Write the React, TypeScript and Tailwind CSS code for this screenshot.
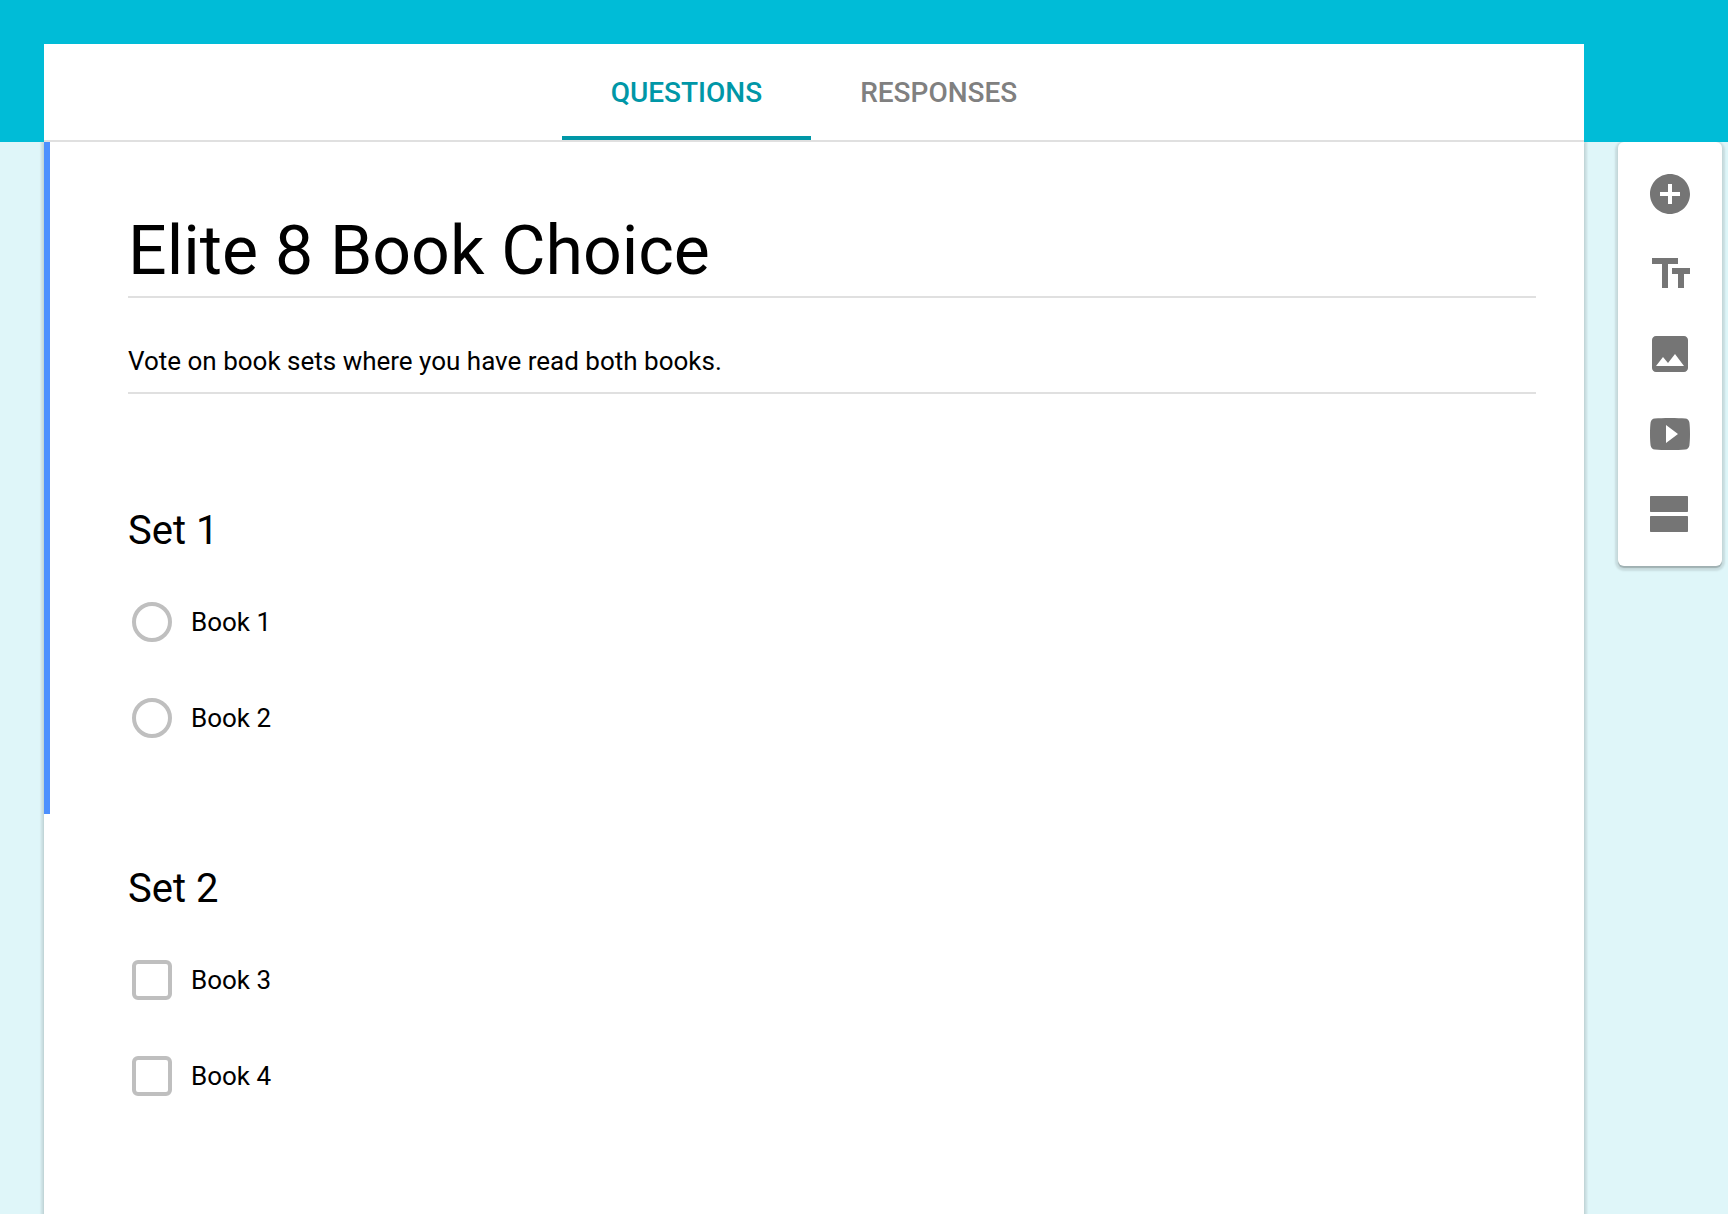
import React, { useState } from "react";
import classNames from "clsx";

interface Question {
  id: string;
  title: string;
  type: "radio" | "checkbox";
  options: string[];
}

const questions: Question[] = [
  { id: "set-1", title: "Set 1", type: "radio", options: ["Book 1", "Book 2"] },
  { id: "set-2", title: "Set 2", type: "checkbox", options: ["Book 3", "Book 4"] },
];

const tools = [
  {
    label: "Add question",
    path: "M12 2C6.48 2 2 6.48 2 12s4.48 10 10 10 10-4.48 10-10S17.52 2 12 2zm5 11h-4v4h-2v-4H7v-2h4V7h2v4h4v2z",
  },
  {
    label: "Add title and description",
    path: "M3 4v3h5v12h3V7h5V4H3zm19 5h-9v3h3v7h3v-7h3V9z",
  },
  {
    label: "Add image",
    path: "M21 19V5c0-1.1-.9-2-2-2H5c-1.1 0-2 .9-2 2v14c0 1.1.9 2 2 2h14c1.1 0 2-.9 2-2zM8.5 13.5l2.5 3.01L14.5 12l4.5 6H5l3.5-4.5z",
  },
  {
    label: "Add video",
    path: "M12 4c-3.2 0-5.6.1-7.6.3C3.2 4.4 2.5 5.1 2.3 6.3 2.1 7.800 2 9.6 2 12s.1 4.2.3 5.7c.2 1.2.9 1.9 2.1 2 2 .2 4.4.3 7.600.3s5.6-.1 7.6-.3c1.2-.1 1.9-.8 2.1-2 .2-1.5.3-3.3.3-5.700s-.1-4.2-.3-5.7c-.2-1.2-.9-1.9-2.1-2C17.6 4.1 15.2 4 12 4zM10 16.5v-9l6 4.5-6 4.5z",
  },
  {
    label: "Add section",
    path: "M2.5 3h18c.3 0 .5.2.5.5v7c0 .3-.2.5-.5.5h-18c-.3 0-.5-.2-.5-.5v-7c0-.3.2-.5.5-.5zM2.5 13h18c.3 0 .5.2.5.5v7c0 .3-.2.5-.5.5h-18c-.3 0-.5-.2-.5-.5v-7c0-.3.2-.5.5-.5z",
  },
];

const tabs = ["QUESTIONS", "RESPONSES"];

const QuestionBlock = ({ id, title, type, options }: Question) => {
  return (
    <fieldset>
      <legend className="text-[40px] leading-[50px]">{title}</legend>
      <div className="flex flex-col gap-14 pt-[46px] pl-1">
        {options.map((option) => (
          <label key={option} className="flex items-center gap-[19px] text-[26px] leading-10">
            <input
              type={type}
              name={id}
              className={classNames(
                "size-10 shrink-0 appearance-none border-4 border-[#bfbfbf] bg-white checked:border-[#0097a7]",
                type === "radio" ? "rounded-full" : "rounded-md checked:bg-[#0097a7]"
              )}
            />
            {option}
          </label>
        ))}
      </div>
    </fieldset>
  );
};

const Toolbar = () => {
  return (
    <aside className="mr-1.5 ml-[34px] flex shrink-0 flex-col gap-8 self-start rounded-md bg-white p-7 shadow-[0_2px_1px_rgba(0,0,0,0.2),0_2px_2px_3px_rgba(0,0,0,0.1)]">
      {tools.map((tool) => (
        <button key={tool.label} type="button" aria-label={tool.label} className="size-12 cursor-pointer">
          <svg viewBox="0 0 24 24" className="size-12 fill-[#757575]">
            <path d={tool.path} />
          </svg>
        </button>
      ))}
    </aside>
  );
};

const App = () => {
  const [activeTab, setActiveTab] = useState("QUESTIONS");
  const [title, setTitle] = useState("Elite 8 Book Choice");
  const [description, setDescription] = useState("Vote on book sets where you have read both books.");

  return (
    <div className="flex min-h-screen flex-col bg-[#dff6f9] font-[Roboto,sans-serif] text-black">
      <header className="bg-[#00bcd7] pt-11 pr-36 pl-11">
        <nav className="flex justify-center border-b-2 border-[#e0e0e0] bg-white">
          {tabs.map((tab) => (
            <button
              key={tab}
              type="button"
              onClick={() => setActiveTab(tab)}
              className={classNames(
                "h-24 cursor-pointer border-b-4 px-[49px] pt-1.5 text-[28px] font-medium",
                activeTab === tab ? "border-[#0097a7] text-[#0097a7]" : "border-transparent text-[#808080]"
              )}
            >
              {tab}
            </button>
          ))}
        </nav>
      </header>

      <div className="flex flex-1 overflow-hidden pl-11">
        <main className="min-w-0 flex-1 bg-white shadow-[0_2px_1px_rgba(0,0,0,0.2),0_2px_2px_3px_rgba(0,0,0,0.1)]">
          <section className="border-l-6 border-[#4d90fe] pt-[68px] pr-12 pb-[76px] pl-[78px]">
            <input
              type="text"
              aria-label="Form title"
              value={title}
              onChange={(e) => setTitle(e.target.value)}
              className="block w-full border-b-2 border-[#e0e0e0] pb-1 text-[68px] leading-[82px] outline-none"
            />
            <input
              type="text"
              aria-label="Form description"
              value={description}
              onChange={(e) => setDescription(e.target.value)}
              className="mt-11 mb-28 block w-full border-b-2 border-[#e0e0e0] pb-3 text-[26px] leading-[38px] outline-none"
            />
            <QuestionBlock {...questions[0]} />
          </section>
          <section className="border-l-6 border-transparent pt-[50px] pr-12 pb-[76px] pl-[78px]">
            <QuestionBlock {...questions[1]} />
          </section>
        </main>
        <Toolbar />
      </div>
    </div>
  );
};

export default App;
